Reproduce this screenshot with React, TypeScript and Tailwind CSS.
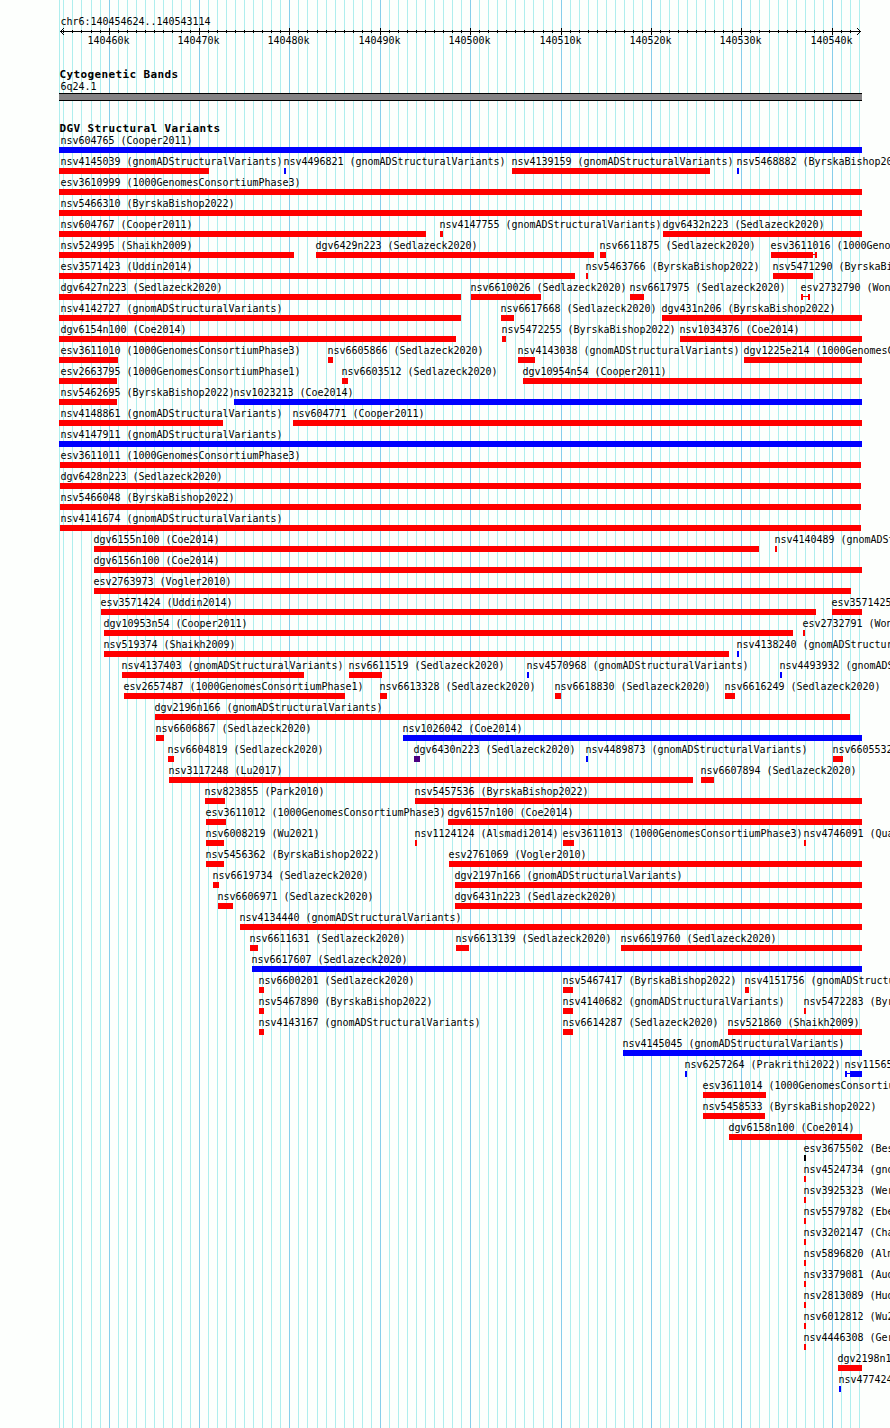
import React from 'react';
import clsx from 'clsx';

type Tone = 'loss' | 'gain' | 'mixed' | 'other';

interface Feature {
  label: string;
  // solid blocks as [start, end]; a thin line joins neighbouring blocks
  blocks: [number, number][];
  tone: Tone;
}

const TONES: Record<Tone, string> = {
  loss: 'bg-[#ff0000]',
  gain: 'bg-[#0000ff]',
  mixed: 'bg-[#4b0082]',
  other: 'bg-black',
};

const LEFT = 59;
const RIGHT = 862;

const f = (label: string, start: number, end: number = RIGHT, tone: Tone = 'loss'): Feature => ({
  label,
  blocks: [[start, end]],
  tone,
});

const GNOMAD = '(gnomADStructuralVariants)';
const SED = '(Sedlazeck2020)';
const BYRSKA = '(ByrskaBishop2022)';
const PHASE1 = '(1000GenomesConsortiumPhase1)';
const PHASE3 = '(1000GenomesConsortiumPhase3)';

const ROWS: Feature[][] = [
  [f('nsv604765 (Cooper2011)', 59, 862, 'gain')],
  [
    f(`nsv4145039 ${GNOMAD}`, 59, 209),
    f(`nsv4496821 ${GNOMAD}`, 284, 286, 'gain'),
    f(`nsv4139159 ${GNOMAD}`, 512, 710),
    f(`nsv5468882 ${BYRSKA}`, 737, 739, 'gain'),
  ],
  [f(`esv3610999 ${PHASE3}`, 59)],
  [f(`nsv5466310 ${BYRSKA}`, 59)],
  [f('nsv604767 (Cooper2011)', 59, 426), f(`nsv4147755 ${GNOMAD}`, 440, 443), f(`dgv6432n223 ${SED}`, 663)],
  [
    f('nsv524995 (Shaikh2009)', 59, 294),
    f(`dgv6429n223 ${SED}`, 316, 594),
    f(`nsv6611875 ${SED}`, 600, 606),
    { label: `esv3611016 ${PHASE3}`, blocks: [[771, 813], [815, 817]], tone: 'loss' },
  ],
  [f('esv3571423 (Uddin2014)', 59, 575), f(`nsv5463766 ${BYRSKA}`, 586, 588), f(`nsv5471290 ${BYRSKA}`, 773, 813)],
  [
    f(`dgv6427n223 ${SED}`, 59, 461),
    f(`nsv6610026 ${SED}`, 471, 541),
    f(`nsv6617975 ${SED}`, 630, 644),
    { label: 'esv2732790 (Wong', blocks: [[801, 803], [808, 810]], tone: 'loss' },
  ],
  [f(`nsv4142727 ${GNOMAD}`, 59, 461), f(`nsv6617668 ${SED}`, 501, 514), f(`dgv431n206 ${BYRSKA}`, 662)],
  [f('dgv6154n100 (Coe2014)', 59, 456), f(`nsv5472255 ${BYRSKA}`, 502, 506), f('nsv1034376 (Coe2014)', 680)],
  [
    f(`esv3611010 ${PHASE3}`, 59, 118),
    f(`nsv6605866 ${SED}`, 328, 333),
    f(`nsv4143038 ${GNOMAD}`, 518, 535),
    f(`dgv1225e214 ${PHASE3}`, 744),
  ],
  [f(`esv2663795 ${PHASE1}`, 59, 117), f(`nsv6603512 ${SED}`, 342, 348), f('dgv10954n54 (Cooper2011)', 523)],
  [f(`nsv5462695 ${BYRSKA}`, 59, 117), f('nsv1023213 (Coe2014)', 234, 862, 'gain')],
  [f(`nsv4148861 ${GNOMAD}`, 59, 223), f('nsv604771 (Cooper2011)', 293)],
  [f(`nsv4147911 ${GNOMAD}`, 59, 862, 'gain')],
  [f(`esv3611011 ${PHASE3}`, 60, 861)],
  [f(`dgv6428n223 ${SED}`, 60, 861)],
  [f(`nsv5466048 ${BYRSKA}`, 60, 861)],
  [f(`nsv4141674 ${GNOMAD}`, 60, 861)],
  [f('dgv6155n100 (Coe2014)', 94, 759), f(`nsv4140489 ${GNOMAD}`, 775, 777)],
  [f('dgv6156n100 (Coe2014)', 94)],
  [f('esv2763973 (Vogler2010)', 94, 851)],
  [f('esv3571424 (Uddin2014)', 101, 816), f('esv3571425', 832)],
  [f('dgv10953n54 (Cooper2011)', 104, 793), f('esv2732791 (Wong', 803, 805)],
  [f('nsv519374 (Shaikh2009)', 104, 729), f(`nsv4138240 ${GNOMAD}`, 737, 739, 'gain')],
  [
    f(`nsv4137403 ${GNOMAD}`, 122, 304),
    f(`nsv6611519 ${SED}`, 349, 382),
    f(`nsv4570968 ${GNOMAD}`, 527, 529, 'gain'),
    f(`nsv4493932 ${GNOMAD}`, 780, 782, 'gain'),
  ],
  [
    f(`esv2657487 ${PHASE1}`, 124, 345),
    f(`nsv6613328 ${SED}`, 380, 387),
    f(`nsv6618830 ${SED}`, 555, 561),
    f(`nsv6616249 ${SED}`, 725, 735),
  ],
  [f(`dgv2196n166 ${GNOMAD}`, 155, 850)],
  [f(`nsv6606867 ${SED}`, 156, 164), f('nsv1026042 (Coe2014)', 403, 862, 'gain')],
  [
    f(`nsv6604819 ${SED}`, 168, 174),
    f(`dgv6430n223 ${SED}`, 414, 420, 'mixed'),
    f(`nsv4489873 ${GNOMAD}`, 586, 588, 'gain'),
    f('nsv6605532', 833, 843),
  ],
  [f('nsv3117248 (Lu2017)', 169, 693), f(`nsv6607894 ${SED}`, 701, 714)],
  [f('nsv823855 (Park2010)', 205, 225), f(`nsv5457536 ${BYRSKA}`, 415)],
  [f(`esv3611012 ${PHASE3}`, 206, 226), f('dgv6157n100 (Coe2014)', 448)],
  [
    f('nsv6008219 (Wu2021)', 206, 224),
    f('nsv1124124 (Alsmadi2014)', 415, 417),
    f(`esv3611013 ${PHASE3}`, 563, 574),
    f('nsv4746091 (Qua', 804, 806),
  ],
  [f(`nsv5456362 ${BYRSKA}`, 206, 224), f('esv2761069 (Vogler2010)', 449)],
  [f(`nsv6619734 ${SED}`, 213, 219), f(`dgv2197n166 ${GNOMAD}`, 455)],
  [f(`nsv6606971 ${SED}`, 218, 233), f(`dgv6431n223 ${SED}`, 455)],
  [f(`nsv4134440 ${GNOMAD}`, 240)],
  [f(`nsv6611631 ${SED}`, 250, 258), f(`nsv6613139 ${SED}`, 456, 469), f(`nsv6619760 ${SED}`, 621)],
  [f(`nsv6617607 ${SED}`, 252, 862, 'gain')],
  [f(`nsv6600201 ${SED}`, 259, 264), f(`nsv5467417 ${BYRSKA}`, 563, 573), f(`nsv4151756 ${GNOMAD}`, 745, 749)],
  [f(`nsv5467890 ${BYRSKA}`, 259, 264), f(`nsv4140682 ${GNOMAD}`, 563, 573), f('nsv5472283 (Byr', 804, 806)],
  [f(`nsv4143167 ${GNOMAD}`, 259, 264), f(`nsv6614287 ${SED}`, 563, 573), f('nsv521860 (Shaikh2009)', 728)],
  [f(`nsv4145045 ${GNOMAD}`, 623, 862, 'gain')],
  [
    f('nsv6257264 (Prakrithi2022)', 685, 687, 'gain'),
    { label: 'nsv11565', blocks: [[845, 847], [850, 862]], tone: 'gain' },
  ],
  [f(`esv3611014 ${PHASE3}`, 703, 766)],
  [f(`nsv5458533 ${BYRSKA}`, 703, 765)],
  [f('dgv6158n100 (Coe2014)', 729)],
  [f('esv3675502 (Bes', 804, 806, 'other')],
  [f('nsv4524734 (gno', 804, 806)],
  [f('nsv3925323 (Wer', 804, 806)],
  [f('nsv5579782 (Ebe', 804, 806)],
  [f('nsv3202147 (Cha', 804, 806)],
  [f('nsv5896820 (Alm', 804, 806)],
  [f('nsv3379081 (Aud', 804, 806)],
  [f('nsv2813089 (Hud', 804, 806)],
  [f('nsv6012812 (Wu2', 804, 806)],
  [f('nsv4446308 (Ger', 804, 806)],
  [f('dgv2198n1', 838)],
  [f('nsv477424', 839, 841, 'gain')],
];

// One tick per kilobase, starting at 140455k
const TICKS = Array.from({ length: 89 }, (_, i) => ({
  x: Math.floor(63.89 + i * 9.04),
  kb: 140455 + i,
}));

const isMajor = (kb: number) => kb % 10 === 0;

const GridLines: React.FC = () => (
  <svg className="absolute inset-0" width="890" height="1428" shapeRendering="crispEdges">
    <rect x={LEFT} y={0} width={1} height={1428} fill="#afeeee" />
    {TICKS.map(t => (
      <rect key={t.kb} x={t.x} y={0} width={1} height={1428} fill={isMajor(t.kb) ? '#87ceeb' : '#afeeee'} />
    ))}
  </svg>
);

const Ruler: React.FC = () => (
  <div>
    <svg className="block" width="890" height="7" shapeRendering="crispEdges">
      <rect x={60} y={3} width={801} height={1} />
      {TICKS.slice(0, -1).map(t => (
        <rect key={t.kb} x={t.x} y={isMajor(t.kb) ? 0 : 2} width={1} height={isMajor(t.kb) ? 7 : 3} />
      ))}
      {[1, 2, 3].map(d => (
        <React.Fragment key={d}>
          <rect x={60 + d} y={3 - d} width={1} height={1} />
          <rect x={60 + d} y={3 + d} width={1} height={1} />
          <rect x={860 - d} y={3 - d} width={1} height={1} />
          <rect x={860 - d} y={3 + d} width={1} height={1} />
        </React.Fragment>
      ))}
    </svg>
    <div className="-mt-px grid grid-cols-[890px]">
      {TICKS.filter(t => isMajor(t.kb)).map(t => (
        <span key={t.kb} className="col-start-1 row-start-1" style={{ marginLeft: t.x - 21.5 }}>
          {t.kb}k
        </span>
      ))}
    </div>
  </div>
);

const Glyph: React.FC<{ feature: Feature }> = ({ feature }) => {
  const { blocks, label, tone } = feature;
  const start = blocks[0][0];
  return (
    <div className="col-start-1 row-start-1" style={{ marginLeft: start }}>
      <div style={{ marginLeft: Math.max(start - 0.5, 60.5) - start }}>{label}</div>
      <div className="flex h-1.5">
        {blocks.map(([a, b], i) => (
          <React.Fragment key={a}>
            {i > 0 && (
              <span className={clsx('mt-0.5 h-px shrink-0', TONES[tone])} style={{ width: a - blocks[i - 1][1] }} />
            )}
            <span className={clsx('h-1.5 shrink-0', TONES[tone])} style={{ width: b - a }} />
          </React.Fragment>
        ))}
      </div>
    </div>
  );
};

const TrackTitle: React.FC<{ children: React.ReactNode }> = ({ children }) => (
  <h2 className="pl-[59.5px] text-[11px] leading-[13px] font-bold tracking-[0.378px]">{children}</h2>
);

export default function App() {
  return (
    <div className="relative h-[1428px] w-[890px] overflow-hidden bg-[#fdfffd] font-['DejaVu_Sans_Mono',monospace] text-[10px] leading-[13px] tracking-[-0.02px] whitespace-nowrap text-black">
      <GridLines />

      <main className="relative flex flex-col pt-[15px]">
        <div className="pl-[60.5px]">chr6:140454624..140543114</div>
        <Ruler />

        {/* Cytogenetic bands */}
        <section className="mt-[21px]">
          <TrackTitle>Cytogenetic Bands</TrackTitle>
          <div className="-mt-px pl-[60.5px]">6q24.1</div>
          <div className="ml-[59px] h-2 w-[803px] border-y border-black bg-[#848284]" />
        </section>

        {/* Structural variants */}
        <section className="mt-[21px]">
          <TrackTitle>DGV Structural Variants</TrackTitle>
          <div className="-mt-px flex flex-col gap-0.5">
            {ROWS.map((row, i) => (
              <div key={i} className="grid grid-cols-[890px]">
                {row.map(feature => (
                  <Glyph key={feature.label} feature={feature} />
                ))}
              </div>
            ))}
          </div>
        </section>
      </main>
    </div>
  );
}
